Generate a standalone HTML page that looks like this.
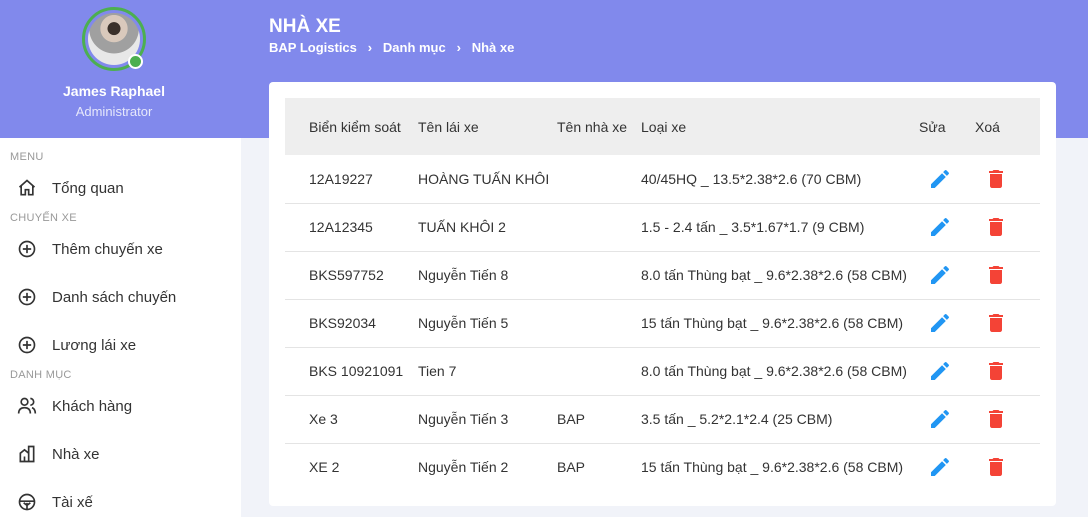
<!DOCTYPE html>
<html><head><meta charset="utf-8"><style>
*{box-sizing:border-box;margin:0;padding:0}
body{width:1088px;height:517px;overflow:hidden;font-family:"Liberation Sans","Noto Sans CJK SC",sans-serif;background:#f1f3f9;position:relative;color:#333}
.top{position:absolute;left:0;top:0;width:1088px;height:138px;background:#8189ec}
.side{position:absolute;left:0;top:138px;width:241px;height:379px;background:#fff}
.avatar{position:absolute;left:82px;top:7px;width:64px;height:64px;border-radius:50%;border:3px solid #4caf50;background:#8189ec;padding:3px}
.avatar div{width:100%;height:100%;border-radius:50%;background:radial-gradient(circle at 50% 30%,#3a302a 0 14%,#d9c9bc 15% 30%,#a0a0a0 31% 55%,#e8e8e8 56%)}
.dot{position:absolute;left:128px;top:54px;width:15px;height:15px;border-radius:50%;background:#4caf50;border:2px solid #fff}
.name{position:absolute;left:0;width:228px;text-align:center;top:83px;color:#fff;font-weight:bold;font-size:14px}
.role{position:absolute;left:0;width:228px;text-align:center;top:104px;color:#e6e8fb;font-size:13px}
.sec{position:absolute;left:10px;font-size:11px;color:#999;letter-spacing:.3px}
.it{position:absolute;left:17px;font-size:15px;color:#333;display:flex;align-items:center}
.it svg{width:20px;height:20px;margin-right:15px;flex-shrink:0}
.title{position:absolute;left:269px;top:16px;color:#fff;font-size:19px;font-weight:bold}
.bc{position:absolute;left:269px;top:40px;color:#fff;font-size:13px;font-weight:bold}
.card{position:absolute;left:269px;top:82px;width:787px;height:424px;background:#fff;border-radius:4px}
table{position:absolute;left:16px;top:16px;width:755px;border-collapse:collapse;font-size:14px;color:#333}
th{background:#eeeeee;font-weight:normal;height:57px;text-align:left}
td{height:48px;border-bottom:1px solid #e4e4e4}
tr:last-child td{border-bottom:none}
th:first-child,td:first-child{padding-left:24px}
</style></head><body>
<div class="top"></div>
<div class="avatar"><div></div></div><div class="dot"></div>
<div class="name">James Raphael</div><div class="role">Administrator</div>
<div class="side"></div>
<div class="sec" style="top:151px">MENU</div>
<div class="it" style="top:178px"><svg viewBox="0 0 24 24" fill="none" stroke="#333" stroke-width="2"><path d="M3 11L12 3l9 8M5 9v11h5v-6h4v6h5V9"/></svg>Tổng quan</div>
<div class="sec" style="top:212px">CHUYẾN XE</div>
<div class="it" style="top:239px"><svg viewBox="0 0 24 24" fill="none" stroke="#333" stroke-width="2"><circle cx="12" cy="12" r="9"/><path d="M12 7v10M7 12h10"/></svg>Thêm chuyến xe</div>
<div class="it" style="top:287px"><svg viewBox="0 0 24 24" fill="none" stroke="#333" stroke-width="2"><circle cx="12" cy="12" r="9"/><path d="M12 7v10M7 12h10"/></svg>Danh sách chuyến</div>
<div class="it" style="top:335px"><svg viewBox="0 0 24 24" fill="none" stroke="#333" stroke-width="2"><circle cx="12" cy="12" r="9"/><path d="M12 7v10M7 12h10"/></svg>Lương lái xe</div>
<div class="sec" style="top:369px">DANH MỤC</div>
<div class="it" style="top:396px"><svg viewBox="0 0 24 24" fill="none" stroke="#333" stroke-width="2"><circle cx="9" cy="7" r="4"/><path d="M2 21c0-5 3-7 7-7s7 2 7 7M16 3a4 4 0 010 8M18 14c3 1 4 3 4 7"/></svg>Khách hàng</div>
<div class="it" style="top:444px"><svg viewBox="0 0 24 24" fill="none" stroke="#333" stroke-width="2"><path d="M3 21h18M4 21V11l5-4 5 4v10M14 21V3h6v18M9 15v6M17 7h0M17 11h0M17 15h0"/></svg>Nhà xe</div>
<div class="it" style="top:492px"><svg viewBox="0 0 24 24" fill="none" stroke="#333" stroke-width="2"><circle cx="12" cy="12" r="9"/><path d="M3 11h18M12 13v8M8 13l4 3 4-3"/></svg>Tài xế</div>
<div class="title">NHÀ XE</div>
<div class="bc">BAP Logistics &nbsp;&nbsp;›&nbsp;&nbsp; Danh mục &nbsp;&nbsp;›&nbsp;&nbsp; Nhà xe</div>
<div class="card"><table>
<colgroup><col style="width:133px"><col style="width:139px"><col style="width:84px"><col style="width:278px"><col style="width:56px"><col></colgroup>
<tr><th>Biển kiểm soát</th><th>Tên lái xe</th><th>Tên nhà xe</th><th>Loại xe</th><th>Sửa</th><th>Xoá</th></tr>
<tr><td>12A19227</td><td>HOÀNG TUẤN KHÔI</td><td></td><td>40/45HQ _ 13.5*2.38*2.6 (70 CBM)</td><td>E</td><td>D</td></tr>
<tr><td>12A12345</td><td>TUẤN KHÔI 2</td><td></td><td>1.5 - 2.4 tấn _ 3.5*1.67*1.7 (9 CBM)</td><td>E</td><td>D</td></tr>
<tr><td>BKS597752</td><td>Nguyễn Tiến 8</td><td></td><td>8.0 tấn Thùng bạt _ 9.6*2.38*2.6 (58 CBM)</td><td>E</td><td>D</td></tr>
<tr><td>BKS92034</td><td>Nguyễn Tiến 5</td><td></td><td>15 tấn Thùng bạt _ 9.6*2.38*2.6 (58 CBM)</td><td>E</td><td>D</td></tr>
<tr><td>BKS 10921091</td><td>Tien 7</td><td></td><td>8.0 tấn Thùng bạt _ 9.6*2.38*2.6 (58 CBM)</td><td>E</td><td>D</td></tr>
<tr><td>Xe 3</td><td>Nguyễn Tiến 3</td><td>BAP</td><td>3.5 tấn _ 5.2*2.1*2.4 (25 CBM)</td><td>E</td><td>D</td></tr>
<tr><td>XE 2</td><td>Nguyễn Tiến 2</td><td>BAP</td><td>15 tấn Thùng bạt _ 9.6*2.38*2.6 (58 CBM)</td><td>E</td><td>D</td></tr>
</table></div>
<script>
document.querySelectorAll('td').forEach(function(td){
 if(td.textContent==='E'){td.innerHTML='<svg width="24" height="24" viewBox="0 0 24 24" style="display:block;margin-left:9px"><path fill="#2196f3" d="M3 17.25V21h3.75L17.81 9.94l-3.75-3.75L3 17.25zM20.71 7.04a1 1 0 000-1.41l-2.34-2.34a1 1 0 00-1.41 0l-1.83 1.83 3.75 3.75 1.83-1.83z"/></svg>';}
 if(td.textContent==='D'){td.innerHTML='<svg width="24" height="24" viewBox="0 0 24 24" style="display:block;margin-left:9px"><path fill="#f44336" d="M6 19c0 1.1.9 2 2 2h8c1.1 0 2-.9 2-2V7H6v12zM19 4h-3.5l-1-1h-5l-1 1H5v2h14V4z"/></svg>';}
});
</script>
</body></html>
